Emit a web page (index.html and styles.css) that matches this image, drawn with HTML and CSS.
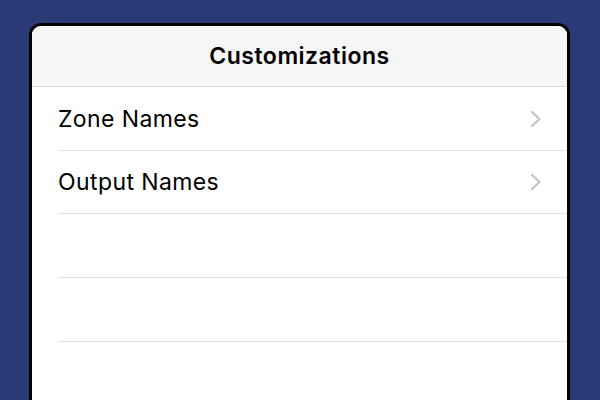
FILE: index.html
```html
<!DOCTYPE html>
<html>
<head>
<meta charset="utf-8">
<link rel="stylesheet" href="styles.css">
</head>
<body>
<div class="card">
  <div class="header">Customizations</div>
  <ul class="list">
    <li class="row"><span class="label">Zone Names</span>
      <svg class="chev" width="12" height="18" viewBox="0 0 12 18"><path d="M2 2 L9.5 9 L2 16" fill="none" stroke="#c4c4c7" stroke-width="2.2" stroke-linecap="round" stroke-linejoin="round"/></svg>
    </li>
    <li class="row"><span class="label">Output Names</span>
      <svg class="chev" width="12" height="18" viewBox="0 0 12 18"><path d="M2 2 L9.5 9 L2 16" fill="none" stroke="#c4c4c7" stroke-width="2.2" stroke-linecap="round" stroke-linejoin="round"/></svg>
    </li>
    <li class="row"></li>
    <li class="row"></li>
    <li class="row"></li>
  </ul>
</div>
</body>
</html>
```
FILE: styles.css
```css
html, body {
  margin: 0;
  padding: 0;
  height: 100%;
  overflow: hidden;
}
body {
  background: #293a76;
  padding: 23px 30px 0 29px;
  box-sizing: border-box;
  font-family: Inter, "Noto Sans", sans-serif;
}
.card {
  background: #fff;
  border: 3px solid #000;
  border-bottom: none;
  border-radius: 12px 12px 0 0;
  height: 420px;
  overflow: hidden;
}
.header {
  height: 60px;
  background: #f6f6f6;
  border-bottom: 1px solid #d9d9d9;
  display: flex;
  align-items: center;
  justify-content: center;
  font-weight: 600;
  font-size: 23px;
  color: #000;
  letter-spacing: 0.5px;
}
.list {
  list-style: none;
  margin: 0;
  padding: 0 0 0 26px;
}
.row {
  height: 63px;
  border-bottom: 1px solid #e3e3e3;
  display: flex;
  align-items: center;
  justify-content: space-between;
  padding: 0 25px 0 0;
}
.row:nth-child(2) {
  height: 62px;
}
.label {
  font-size: 23px;
  color: #000;
  letter-spacing: 0.4px;
}
.chev {
  display: block;
}
```
